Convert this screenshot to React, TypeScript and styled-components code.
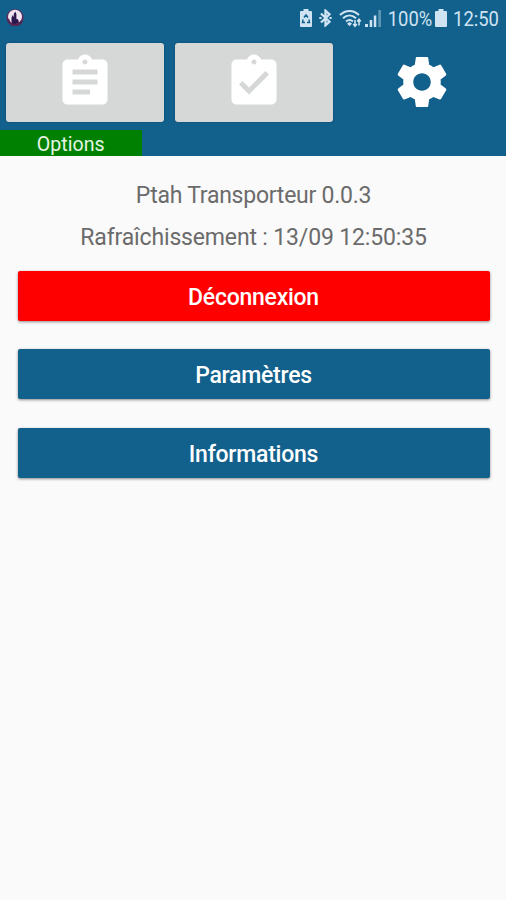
import React from 'react';
import styled, { createGlobalStyle } from 'styled-components';

const GlobalStyle = createGlobalStyle`
  *, *::before, *::after { box-sizing: border-box; }
  body { margin: 0; background: #fafafa; font-family: Roboto, "Liberation Sans", sans-serif; }
  button { font-family: inherit; border: 0; padding: 0; }
`;

const Screen = styled.div`
  display: flex;
  flex-direction: column;
  width: 506px;
  height: 900px;
  overflow: hidden;
  background: #fafafa;
`;

const Header = styled.header`
  height: 156px;
  background: #12618d;
  display: flex;
  flex-direction: column;
`;

const StatusBar = styled.div`
  height: 42.5px;
  padding: 8px 6px 0 6px;
  display: flex;
  align-items: flex-start;
  justify-content: space-between;
`;

const StatusGroup = styled.div`
  display: flex;
  align-items: center;
  height: 20px;
  color: #cfe3f2;
`;

const StatusText = styled.span<{ $width: number }>`
  width: ${(p) => p.$width}px;
  font-size: 20px;
  line-height: 22px;
  padding-top: 2px;
  white-space: nowrap;
  display: flex;
  justify-content: center;
  transform: scaleX(0.92);
`;

const StatusIcon = styled.svg<{ $gap?: number }>`
  display: block;
  flex: none;
  margin-right: ${(p) => p.$gap ?? 0}px;
`;

const Tabs = styled.nav`
  display: grid;
  grid-template-columns: 158px 158px 158px;
  column-gap: 10.7px;
  padding-left: 6px;
  height: 87.5px;
`;

const Tab = styled.button<{ $active?: boolean }>`
  height: 79px;
  border-radius: 3px;
  background: ${(p) => (p.$active ? 'transparent' : '#d6d8d8')};
  box-shadow: ${(p) => (p.$active ? 'none' : '0 0 2px rgba(0, 30, 60, 0.45)')};
  color: #fff;
  display: flex;
  align-items: center;
  justify-content: center;
`;

const TabIcon = styled.svg`
  display: block;
  width: 60px;
  height: 60px;
  fill: currentColor;
`;

const TabLabel = styled.div`
  width: 141.5px;
  height: 26px;
  background: #008000;
  color: #e6f5e6;
  font-size: 19.6px;
  line-height: 30px;
  text-align: center;
`;

const Content = styled.main`
  display: flex;
  flex-direction: column;
  padding: 19px 16.5px 0 17.5px;
`;

const Info = styled.p<{ $tracking: number }>`
  margin: 0;
  height: 42px;
  line-height: 42px;
  text-align: center;
  font-size: 23px;
  letter-spacing: ${(p) => p.$tracking}px;
  color: #6b6b6b;
`;

const Actions = styled.div`
  display: flex;
  flex-direction: column;
  gap: 28.7px;
  padding-top: 11.7px;
`;

const Action = styled.button<{ $danger?: boolean }>`
  height: 50px;
  border-radius: 2px;
  background: ${(p) => (p.$danger ? '#ff0000' : '#12618d')};
  box-shadow: 0 1px 3px rgba(0, 0, 0, 0.45);
  color: #fff;
  font-size: 23px;
  letter-spacing: -0.25px;
  line-height: 47px;
  padding-top: 3px;
  font-weight: 500;
`;

function AppBadge() {
  return (
    <StatusIcon width="19" height="20" viewBox="0 0 19 20">
      <circle cx="9" cy="9.500" r="8.600" fill="#5b2a5e" />
      <circle cx="9" cy="8.800" r="7" fill="#f1e4f1" />
      <path d="M5.500 13.500V9.500l1.300-2.500 1 2.500V6l1.400-2.500L10.400 6v5l1.800.5.800 3-3 1.500H6z" fill="#2a174d" />
      <path d="M2 11c1 4 4 6 7 6s5.500-1.500 6.500-4" fill="none" stroke="#57234f" strokeWidth="2.200" />
    </StatusIcon>
  );
}

function BatterySaver() {
  return (
    <StatusIcon width="12" height="18" viewBox="0 0 12 18" $gap={7}>
      <path d="M3.500 0h5v2H11a1 1 0 0 1 1 1v14a1 1 0 0 1-1 1H1a1 1 0 0 1-1-1V3a1 1 0 0 1 1-1h2.500z" fill="currentColor" />
      <path d="M4 8.500 6 6l2 2.500M9 10.500l.5 3H7M5 13.500H2.500l.6-3" fill="none" stroke="#12618d" strokeWidth="1.500" />
    </StatusIcon>
  );
}

function Bluetooth() {
  return (
    <StatusIcon width="13" height="18" viewBox="0 0 13 18" $gap={7}>
      <path d="M2 4.500 10.500 12.700 6.500 16.300V1.700l4 3.600L2 13.500" fill="none" stroke="currentColor" strokeWidth="2.300" />
      <path d="M.3 9h2.200M10.500 9h2.200" stroke="currentColor" strokeWidth="2" />
    </StatusIcon>
  );
}

function Wifi() {
  return (
    <StatusIcon width="24" height="19" viewBox="0 0 24 19" $gap={2}>
      <g fill="none" stroke="currentColor" strokeWidth="2">
        <path d="M1 6C6.500.5 14.500.5 20 6" />
        <path d="M4 9.300C8 5.500 13 5.500 17 9.300" />
        <path d="M7 12.500c2.500-2 4.700-2 7 0" />
      </g>
      <path d="m8 14.500 2.500-1.500 2.500 1.500-2.500 2.700z" fill="currentColor" />
      <path d="M16 11v6m-1.800-2 1.800 2.200 1.800-2.200M20 16.500v-6m-1.800 2 1.800-2.200 1.800 2.200" fill="none" stroke="currentColor" strokeWidth="1.600" />
    </StatusIcon>
  );
}

function Signal() {
  return (
    <StatusIcon width="17" height="18" viewBox="0 0 17 18" $gap={5}>
      <path d="M0 15h3v3H0zM4.700 11h2.500v7H4.700zM8.800 6.500h2.500V18H8.800z" fill="currentColor" />
      <path d="M13.300 1H16v17h-2.700z" fill="currentColor" opacity="0.4" />
    </StatusIcon>
  );
}

function Battery() {
  return (
    <StatusIcon width="12" height="18" viewBox="0 0 12 18" $gap={5}>
      <path d="M3.500 0h5v2H11a1 1 0 0 1 1 1v14a1 1 0 0 1-1 1H1a1 1 0 0 1-1-1V3a1 1 0 0 1 1-1h2.500z" fill="currentColor" />
    </StatusIcon>
  );
}

const clipboard =
  'M19 3h-4.180C14.400 1.840 13.300 1 12 1s-2.400.84-2.820 2H5c-1.100 0-2 .9-2 2v14c0 1.100.9 2 2 2h14c1.100 0 2-.9 2-2V5c0-1.100-.9-2-2-2zm-7 0c.55 0 1 .45 1 1s-.45 1-1 1-1-.45-1-1 .45-1 1-1z';

const tabs = [
  { label: 'Liste', path: clipboard + 'm2 14H7v-2h7v2zm3-4H7v-2h10v2zm0-4H7V7h10v2z' },
  { label: 'Validation', path: clipboard + 'm-2 14l-4-4 1.410-1.410L10 14.170l6.590-6.590L18 9l-8 8z' },
  {
    label: 'Options',
    active: true,
    path: 'M19.430 12.980c.04-.32.07-.64.07-.98s-.03-.66-.07-.98l2.110-1.650c.19-.15.24-.42.12-.64l-2-3.460c-.12-.22-.39-.3-.61-.22l-2.490 1c-.52-.4-1.080-.73-1.690-.98l-.38-2.650C14.460 2.180 14.250 2 14 2h-4c-.25 0-.46.18-.49.42l-.38 2.650c-.61.25-1.170.59-1.690.98l-2.490-1c-.23-.09-.49 0-.61.22l-2 3.460c-.13.22-.07.49.12.64l2.110 1.650c-.04.32-.07.65-.07.98s.03.66.07.98l-2.110 1.650c-.19.15-.24.42-.12.64l2 3.460c.12.22.39.3.61.22l2.490-1c.52.4 1.080.73 1.690.98l.38 2.650c.03.24.24.42.49.42h4c.25 0 .46-.18.49-.42l.38-2.650c.61-.25 1.170-.59 1.690-.98l2.490 1c.23.09.49 0 .61-.22l2-3.460c.12-.22.07-.49-.12-.64l-2.110-1.650zM12 15.500c-1.930 0-3.500-1.570-3.500-3.500s1.570-3.500 3.500-3.500 3.500 1.570 3.500 3.500-1.570 3.500-3.500 3.500z',
  },
];

export default function App() {
  return (
    <Screen>
      <GlobalStyle />
      <Header>
        <StatusBar>
          <AppBadge />
          <StatusGroup>
            <BatterySaver />
            <Bluetooth />
            <Wifi />
            <Signal />
            <StatusText $width={46}>100%</StatusText>
            <StatusIcon as="span" $gap={2} />
            <Battery />
            <StatusText $width={48}>12:50</StatusText>
          </StatusGroup>
        </StatusBar>
        <Tabs>
          {tabs.map((t) => (
            <Tab key={t.label} $active={t.active}>
              <TabIcon viewBox="0 0 24 24" aria-hidden="true">
                <path d={t.path} />
              </TabIcon>
            </Tab>
          ))}
        </Tabs>
        <TabLabel>Options</TabLabel>
      </Header>
      <Content>
        <Info $tracking={-0.25}>Ptah Transporteur 0.0.3</Info>
        <Info $tracking={-0.16}>Rafraîchissement : 13/09 12:50:35</Info>
        <Actions>
          <Action $danger>Déconnexion</Action>
          <Action>Paramètres</Action>
          <Action>Informations</Action>
        </Actions>
      </Content>
    </Screen>
  );
}
